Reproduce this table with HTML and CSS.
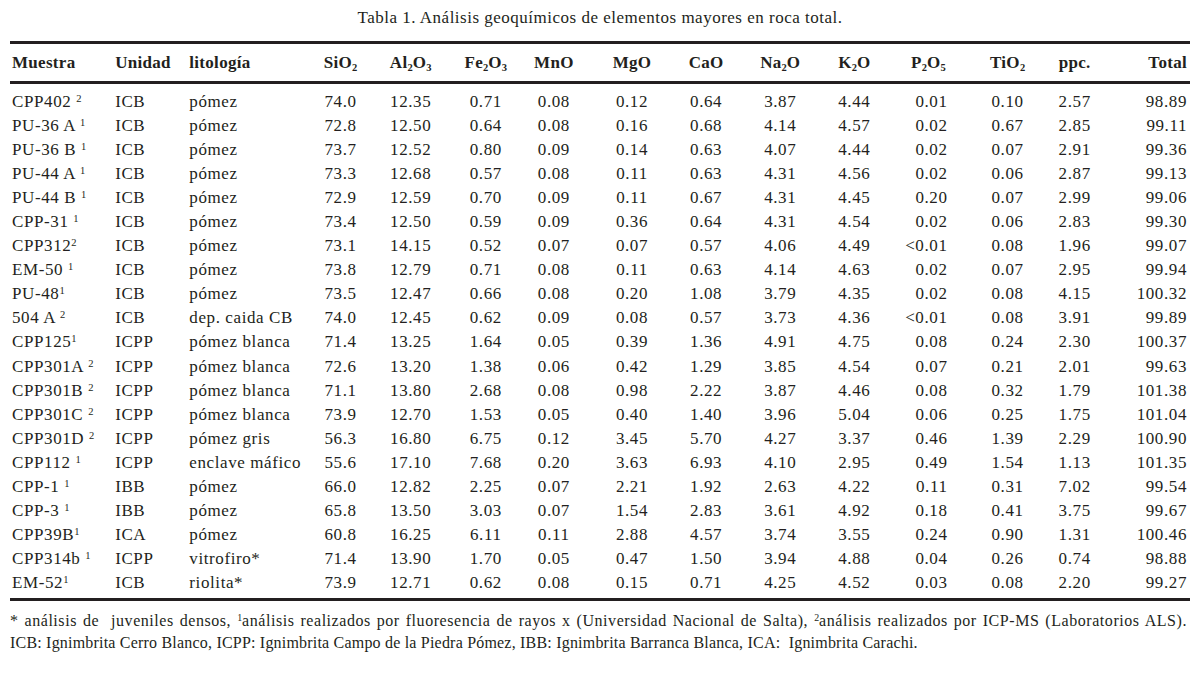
FILE: index.html
```html
<!DOCTYPE html>
<html lang="es">
<head>
<meta charset="utf-8">
<title>Tabla 1</title>
<link rel="stylesheet" href="styles.css">
</head>
<body>
<div class="page">
  <p class="caption">Tabla 1. Análisis geoquímicos de elementos mayores en roca total.</p>
  <table class="data">
    <colgroup>
      <col class="c-muestra"><col class="c-unidad"><col class="c-lito">
      <col class="c-si"><col class="c-al"><col class="c-fe"><col class="c-mn">
      <col class="c-mg"><col class="c-ca"><col class="c-na"><col class="c-k">
      <col class="c-p"><col class="c-ti"><col class="c-ppc"><col class="c-tot">
    </colgroup>
    <thead>
      <tr>
        <th class="l">Muestra</th><th class="l">Unidad</th><th class="l">litología</th>
        <th>SiO<sub>2</sub></th><th>Al<sub>2</sub>O<sub>3</sub></th><th>Fe<sub>2</sub>O<sub>3</sub></th>
        <th>MnO</th><th>MgO</th><th>CaO</th><th>Na<sub>2</sub>O</th><th>K<sub>2</sub>O</th>
        <th>P<sub>2</sub>O<sub>5</sub></th><th>TiO<sub>2</sub></th><th>ppc.</th><th class="r">Total</th>
      </tr>
    </thead>
    <tbody>
      <tr class="first"><td class="l">CPP402 <sup>2</sup></td><td class="l">ICB</td><td class="l">pómez</td><td>74.0</td><td>12.35</td><td>0.71</td><td>0.08</td><td>0.12</td><td>0.64</td><td>3.87</td><td>4.44</td><td class="p">0.01</td><td>0.10</td><td>2.57</td><td class="r">98.89</td></tr>
      <tr><td class="l">PU-36 A <sup>1</sup></td><td class="l">ICB</td><td class="l">pómez</td><td>72.8</td><td>12.50</td><td>0.64</td><td>0.08</td><td>0.16</td><td>0.68</td><td>4.14</td><td>4.57</td><td class="p">0.02</td><td>0.67</td><td>2.85</td><td class="r">99.11</td></tr>
      <tr><td class="l">PU-36 B <sup>1</sup></td><td class="l">ICB</td><td class="l">pómez</td><td>73.7</td><td>12.52</td><td>0.80</td><td>0.09</td><td>0.14</td><td>0.63</td><td>4.07</td><td>4.44</td><td class="p">0.02</td><td>0.07</td><td>2.91</td><td class="r">99.36</td></tr>
      <tr><td class="l">PU-44 A <sup>1</sup></td><td class="l">ICB</td><td class="l">pómez</td><td>73.3</td><td>12.68</td><td>0.57</td><td>0.08</td><td>0.11</td><td>0.63</td><td>4.31</td><td>4.56</td><td class="p">0.02</td><td>0.06</td><td>2.87</td><td class="r">99.13</td></tr>
      <tr><td class="l">PU-44 B <sup>1</sup></td><td class="l">ICB</td><td class="l">pómez</td><td>72.9</td><td>12.59</td><td>0.70</td><td>0.09</td><td>0.11</td><td>0.67</td><td>4.31</td><td>4.45</td><td class="p">0.20</td><td>0.07</td><td>2.99</td><td class="r">99.06</td></tr>
      <tr><td class="l">CPP-31 <sup>1</sup></td><td class="l">ICB</td><td class="l">pómez</td><td>73.4</td><td>12.50</td><td>0.59</td><td>0.09</td><td>0.36</td><td>0.64</td><td>4.31</td><td>4.54</td><td class="p">0.02</td><td>0.06</td><td>2.83</td><td class="r">99.30</td></tr>
      <tr><td class="l">CPP312<sup>2</sup></td><td class="l">ICB</td><td class="l">pómez</td><td>73.1</td><td>14.15</td><td>0.52</td><td>0.07</td><td>0.07</td><td>0.57</td><td>4.06</td><td>4.49</td><td class="p">&lt;0.01</td><td>0.08</td><td>1.96</td><td class="r">99.07</td></tr>
      <tr><td class="l">EM-50 <sup>1</sup></td><td class="l">ICB</td><td class="l">pómez</td><td>73.8</td><td>12.79</td><td>0.71</td><td>0.08</td><td>0.11</td><td>0.63</td><td>4.14</td><td>4.63</td><td class="p">0.02</td><td>0.07</td><td>2.95</td><td class="r">99.94</td></tr>
      <tr><td class="l">PU-48<sup>1</sup></td><td class="l">ICB</td><td class="l">pómez</td><td>73.5</td><td>12.47</td><td>0.66</td><td>0.08</td><td>0.20</td><td>1.08</td><td>3.79</td><td>4.35</td><td class="p">0.02</td><td>0.08</td><td>4.15</td><td class="r">100.32</td></tr>
      <tr><td class="l">504 A <sup>2</sup></td><td class="l">ICB</td><td class="l">dep. caida CB</td><td>74.0</td><td>12.45</td><td>0.62</td><td>0.09</td><td>0.08</td><td>0.57</td><td>3.73</td><td>4.36</td><td class="p">&lt;0.01</td><td>0.08</td><td>3.91</td><td class="r">99.89</td></tr>
      <tr><td class="l">CPP125<sup>1</sup></td><td class="l">ICPP</td><td class="l">pómez blanca</td><td>71.4</td><td>13.25</td><td>1.64</td><td>0.05</td><td>0.39</td><td>1.36</td><td>4.91</td><td>4.75</td><td class="p">0.08</td><td>0.24</td><td>2.30</td><td class="r">100.37</td></tr>
      <tr><td class="l">CPP301A <sup>2</sup></td><td class="l">ICPP</td><td class="l">pómez blanca</td><td>72.6</td><td>13.20</td><td>1.38</td><td>0.06</td><td>0.42</td><td>1.29</td><td>3.85</td><td>4.54</td><td class="p">0.07</td><td>0.21</td><td>2.01</td><td class="r">99.63</td></tr>
      <tr><td class="l">CPP301B <sup>2</sup></td><td class="l">ICPP</td><td class="l">pómez blanca</td><td>71.1</td><td>13.80</td><td>2.68</td><td>0.08</td><td>0.98</td><td>2.22</td><td>3.87</td><td>4.46</td><td class="p">0.08</td><td>0.32</td><td>1.79</td><td class="r">101.38</td></tr>
      <tr><td class="l">CPP301C <sup>2</sup></td><td class="l">ICPP</td><td class="l">pómez blanca</td><td>73.9</td><td>12.70</td><td>1.53</td><td>0.05</td><td>0.40</td><td>1.40</td><td>3.96</td><td>5.04</td><td class="p">0.06</td><td>0.25</td><td>1.75</td><td class="r">101.04</td></tr>
      <tr><td class="l">CPP301D <sup>2</sup></td><td class="l">ICPP</td><td class="l">pómez gris</td><td>56.3</td><td>16.80</td><td>6.75</td><td>0.12</td><td>3.45</td><td>5.70</td><td>4.27</td><td>3.37</td><td class="p">0.46</td><td>1.39</td><td>2.29</td><td class="r">100.90</td></tr>
      <tr><td class="l">CPP112 <sup>1</sup></td><td class="l">ICPP</td><td class="l">enclave máfico</td><td>55.6</td><td>17.10</td><td>7.68</td><td>0.20</td><td>3.63</td><td>6.93</td><td>4.10</td><td>2.95</td><td class="p">0.49</td><td>1.54</td><td>1.13</td><td class="r">101.35</td></tr>
      <tr><td class="l">CPP-1 <sup>1</sup></td><td class="l">IBB</td><td class="l">pómez</td><td>66.0</td><td>12.82</td><td>2.25</td><td>0.07</td><td>2.21</td><td>1.92</td><td>2.63</td><td>4.22</td><td class="p">0.11</td><td>0.31</td><td>7.02</td><td class="r">99.54</td></tr>
      <tr><td class="l">CPP-3 <sup>1</sup></td><td class="l">IBB</td><td class="l">pómez</td><td>65.8</td><td>13.50</td><td>3.03</td><td>0.07</td><td>1.54</td><td>2.83</td><td>3.61</td><td>4.92</td><td class="p">0.18</td><td>0.41</td><td>3.75</td><td class="r">99.67</td></tr>
      <tr><td class="l">CPP39B<sup>1</sup></td><td class="l">ICA</td><td class="l">pómez</td><td>60.8</td><td>16.25</td><td>6.11</td><td>0.11</td><td>2.88</td><td>4.57</td><td>3.74</td><td>3.55</td><td class="p">0.24</td><td>0.90</td><td>1.31</td><td class="r">100.46</td></tr>
      <tr><td class="l">CPP314b <sup>1</sup></td><td class="l">ICPP</td><td class="l">vitrofiro*</td><td>71.4</td><td>13.90</td><td>1.70</td><td>0.05</td><td>0.47</td><td>1.50</td><td>3.94</td><td>4.88</td><td class="p">0.04</td><td>0.26</td><td>0.74</td><td class="r">98.88</td></tr>
      <tr class="last"><td class="l">EM-52<sup>1</sup></td><td class="l">ICB</td><td class="l">riolita*</td><td>73.9</td><td>12.71</td><td>0.62</td><td>0.08</td><td>0.15</td><td>0.71</td><td>4.25</td><td>4.52</td><td class="p">0.03</td><td>0.08</td><td>2.20</td><td class="r">99.27</td></tr>
    </tbody>
  </table>
  <div class="notes">
    <p class="note-full">* análisis de&nbsp; juveniles densos, <sup>1</sup>análisis realizados por fluoresencia de rayos x (Universidad Nacional de Salta), <sup>2</sup>análisis realizados por ICP-MS (Laboratorios ALS).</p>
    <p>ICB: Ignimbrita Cerro Blanco, ICPP: Ignimbrita Campo de la Piedra Pómez, IBB: Ignimbrita Barranca Blanca, ICA:&nbsp; Ignimbrita Carachi.</p>
  </div>
</div>
</body>
</html>
```

FILE: styles.css
```css
html, body {
  margin: 0;
  padding: 0;
  background: #ffffff;
}

.page {
  width: 1180px;
  padding: 0 10px;
  font-family: "Liberation Serif", "Times New Roman", serif;
  color: #231f20;
}

.caption {
  margin: 0;
  padding-top: 8px;
  height: 41px;
  box-sizing: border-box;
  text-align: center;
  font-size: 17px;
  line-height: 20px;
  letter-spacing: 0.5px;
}

.data {
  width: 1180px;
  border-collapse: collapse;
  table-layout: fixed;
  font-size: 17px;
  letter-spacing: 0.6px;
}

.c-muestra { width: 103px; }
.c-unidad { width: 74px; }
.c-lito { width: 122px; }
.c-si { width: 62px; }
.c-al { width: 78px; }
.c-fe { width: 72px; }
.c-mn { width: 64px; }
.c-mg { width: 92px; }
.c-ca { width: 56px; }
.c-na { width: 92px; }
.c-k { width: 56px; }
.c-p { width: 92px; }
.c-ti { width: 66px; }
.c-ppc { width: 68px; }
.c-tot { width: 81px; }

.data thead tr {
  border-top: 3px solid #231f20;
  border-bottom: 3px solid #231f20;
}

.data th {
  height: 37px;
  padding: 0;
  font-weight: bold;
  letter-spacing: 0.3px;
  text-align: center;
  white-space: nowrap;
}

.data td {
  line-height: 24.05px;
  padding: 0;
  text-align: center;
  white-space: nowrap;
}

.data tr.first td {
  padding-top: 6px;
}

.data tr.last td {
  padding-bottom: 3px;
}

.data tbody {
  border-bottom: 3px solid #231f20;
}

.data .l {
  text-align: left;
  padding-left: 2px;
}

.data .r {
  text-align: right;
  padding-right: 3px;
}

.data td.p {
  text-align: right;
  padding-right: 27px;
}

sub {
  font-size: 0.62em;
  vertical-align: -0.3em;
  line-height: 0;
  letter-spacing: 0;
}

sup {
  font-size: 0.62em;
  vertical-align: 0.5em;
  line-height: 0;
  letter-spacing: 0;
}

.notes {
  padding-top: 9px;
  font-size: 16px;
  line-height: 22px;
  letter-spacing: 0.2px;
}

.notes p {
  margin: 0;
  white-space: nowrap;
}

.notes .note-full {
  width: 1177px;
  white-space: normal;
  letter-spacing: 0.55px;
  text-align: justify;
  text-align-last: justify;
}
```
